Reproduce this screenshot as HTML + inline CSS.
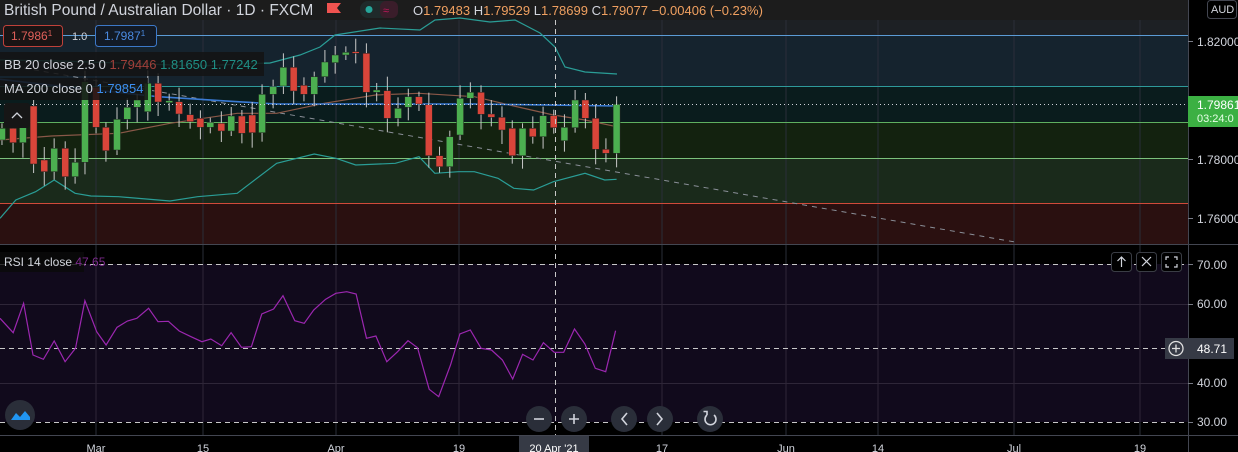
<!DOCTYPE html>
<html><head><meta charset="utf-8"><style>
html,body{margin:0;padding:0;background:#000;width:1238px;height:452px;overflow:hidden;font-family:"Liberation Sans",sans-serif}
svg text{font-family:"Liberation Sans",sans-serif}
</style></head><body>
<svg id="s" width="1238" height="452" xmlns="http://www.w3.org/2000/svg">
<rect width="1238" height="452" fill="#000"/>
<rect x="0" y="0" width="1188" height="20" fill="#1c1c1c"/>
<rect x="0" y="20" width="1188" height="15" fill="#1d2024"/>
<rect x="0" y="35" width="1188" height="51" fill="#15232e"/>
<rect x="0" y="86" width="1188" height="36" fill="#0a1c1d"/>
<rect x="0" y="122" width="1188" height="36" fill="#13220f"/>
<rect x="0" y="158" width="1188" height="45" fill="#1a2a1b"/>
<rect x="0" y="203" width="1188" height="41" fill="#2a1010"/>
<g stroke="#2a2e39" stroke-width="1">
<line x1="96" y1="20" x2="96" y2="435"/><line x1="203" y1="20" x2="203" y2="435"/><line x1="336" y1="20" x2="336" y2="435"/><line x1="459" y1="20" x2="459" y2="435"/><line x1="662" y1="20" x2="662" y2="435"/><line x1="786" y1="20" x2="786" y2="435"/><line x1="878" y1="20" x2="878" y2="435"/><line x1="1014" y1="20" x2="1014" y2="435"/><line x1="1140" y1="20" x2="1140" y2="435"/>
</g>
<line x1="0" y1="35.5" x2="1188" y2="35.5" stroke="#5b9bd5"/>
<line x1="0" y1="86.5" x2="1188" y2="86.5" stroke="#2e9a9a"/>
<line x1="0" y1="122.5" x2="1188" y2="122.5" stroke="#5fb060"/>
<line x1="0" y1="158.5" x2="1188" y2="158.5" stroke="#7cc27c"/>
<line x1="0" y1="203.5" x2="1188" y2="203.5" stroke="#d04a3a"/>
<line x1="24" y1="68" x2="1015" y2="242" stroke="#8a8f98" stroke-dasharray="5,5"/>
<g id="ind" fill="none" stroke-width="1.2"></g>
<g id="candles"></g>
<line x1="0" y1="104.5" x2="1188" y2="104.5" stroke="#cfd3da" stroke-dasharray="1,3"/>
<rect x="0" y="264" width="1188" height="158" fill="#110a1c"/>
<line x1="0" y1="304.5" x2="1188" y2="304.5" stroke="#2e2638"/>
<line x1="0" y1="383.5" x2="1188" y2="383.5" stroke="#2e2638"/>
<g stroke="#2e2638"><line x1="96" y1="264" x2="96" y2="422"/><line x1="203" y1="264" x2="203" y2="422"/><line x1="336" y1="264" x2="336" y2="422"/><line x1="459" y1="264" x2="459" y2="422"/><line x1="662" y1="264" x2="662" y2="422"/><line x1="786" y1="264" x2="786" y2="422"/><line x1="878" y1="264" x2="878" y2="422"/><line x1="1014" y1="264" x2="1014" y2="422"/><line x1="1140" y1="264" x2="1140" y2="422"/></g>
<g stroke="#c8c8c8" stroke-dasharray="5,4">
<line x1="0" y1="264.5" x2="1188" y2="264.5"/><line x1="0" y1="422.5" x2="1188" y2="422.5"/><line x1="0" y1="348.5" x2="1165" y2="348.5"/>
<line x1="555.5" y1="20" x2="555.5" y2="435"/>
</g>
<polyline id="rsi" fill="none" stroke="#9c27b0" stroke-width="1.2"/>
<line x1="0" y1="244.5" x2="1238" y2="244.5" stroke="#434651"/>
<line x1="1188.5" y1="0" x2="1188.5" y2="452" stroke="#434651"/>
<line x1="0" y1="435.5" x2="1238" y2="435.5" stroke="#434651"/>
<text x="4" y="15" font-size="15.5" fill="#d1d4dc">British Pound / Australian Dollar · 1D · FXCM</text>
<path d="M327 3h14l-4 5 4 5h-14z" fill="#f05350"/>
<rect x="360" y="1" width="38" height="17" rx="8" fill="#1f2a2a"/>
<circle cx="369" cy="9.5" r="3.5" fill="#26a69a"/>
<rect x="380" y="1" width="18" height="17" rx="6" fill="#3a1d2a"/>
<text x="383" y="14" font-size="11" fill="#c2185b">≈</text>
<text x="413" y="15" font-size="13" fill="#d1d4dc">O<tspan fill="#f0a060">1.79483</tspan> H<tspan fill="#f0a060">1.79529</tspan> L<tspan fill="#f0a060">1.78699</tspan> C<tspan fill="#f0a060">1.79077</tspan> <tspan fill="#f0a060">−0.00406 (−0.23%)</tspan></text>
<rect x="3.5" y="25.5" width="59" height="21" rx="3" fill="#1a1414" stroke="#c0413a"/>
<text x="11" y="40" font-size="12" fill="#e0605a">1.7986<tspan font-size="8" dy="-4">1</tspan></text>
<text x="72" y="40" font-size="11" fill="#d1d4dc">1.0</text>
<rect x="95.5" y="25.5" width="61" height="21" rx="3" fill="#121a26" stroke="#3c78c8"/>
<text x="104" y="40" font-size="12" fill="#4a8ae0">1.7987<tspan font-size="8" dy="-4">1</tspan></text>
<rect x="0" y="52" width="264" height="24" fill="#131313" opacity="0.85"/>
<text x="4" y="69" font-size="13" fill="#d1d4dc">BB 20 close 2.5 0 <tspan fill="#a0403a">1.79446</tspan> <tspan fill="#1f8f85">1.81650</tspan> <tspan fill="#1f8f85">1.77242</tspan></text>
<rect x="0" y="78" width="148" height="22" fill="#131313" opacity="0.85"/>
<text x="4" y="93" font-size="13" fill="#d1d4dc">MA 200 close 0 <tspan fill="#3c8ef0">1.79854</tspan></text>
<rect x="4" y="103" width="26" height="25" rx="3" fill="#161616"/>
<path d="M12 118l5-5 5 5" stroke="#d1d4dc" fill="none" stroke-width="1.3"/>
<rect x="0" y="252" width="84" height="20" fill="#0a0a0a" opacity="0.8"/>
<text x="4" y="266" font-size="12" fill="#d1d4dc">RSI 14 close <tspan fill="#7b2a8c">47.65</tspan></text>
<rect x="1207.5" y="0.5" width="29" height="18" rx="3" fill="#000" stroke="#434651"/>
<text x="1211" y="13" font-size="11" fill="#d1d4dc">AUD</text>
<g font-size="12" fill="#d1d4dc">
<text x="1197" y="46">1.82000</text>
<text x="1197" y="164">1.78000</text>
<text x="1197" y="223">1.76000</text>
<text x="1197" y="269">70.00</text>
<text x="1197" y="308">60.00</text>
<text x="1197" y="387">40.00</text>
<text x="1197" y="426">30.00</text>
</g>
<g stroke="#787b86"><line x1="1188" y1="41.5" x2="1193" y2="41.5"/><line x1="1188" y1="159.5" x2="1193" y2="159.5"/><line x1="1188" y1="218.5" x2="1193" y2="218.5"/><line x1="1188" y1="264.5" x2="1193" y2="264.5"/><line x1="1188" y1="304.5" x2="1193" y2="304.5"/><line x1="1188" y1="383.5" x2="1193" y2="383.5"/><line x1="1188" y1="422.5" x2="1193" y2="422.5"/></g>
<rect x="1188" y="96" width="50" height="31" fill="#3cb043"/>
<text x="1197" y="109" font-size="12" fill="#fff">1.79861</text>
<text x="1197" y="122" font-size="11" fill="#e8ffe8">03:24:0</text>
<rect x="1165" y="338" width="23" height="21" fill="#363a45"/>
<circle cx="1176" cy="348.5" r="7" fill="none" stroke="#e0e0e0" stroke-width="1.3"/>
<path d="M1172 348.5h8M1176 344.5v8" stroke="#e0e0e0" stroke-width="1.3"/>
<rect x="1188" y="338" width="46" height="21" fill="#363a45"/>
<text x="1197" y="353" font-size="12" fill="#fff">48.71</text>
<g fill="#000" stroke="#3a3d45"><rect x="1111.5" y="252.5" width="20" height="19" rx="3"/><rect x="1136.5" y="252.5" width="20" height="19" rx="3"/><rect x="1161.5" y="252.5" width="20" height="19" rx="3"/></g>
<g stroke="#d1d4dc" fill="none" stroke-width="1.2"><path d="M1121.5 267v-10M1117.5 261l4-4 4 4"/><path d="M1142 257l9 9M1151 257l-9 9"/><path d="M1166 260v-3h3M1174 257h3v3M1177 264v3h-3M1169 267h-3v-3"/></g>
<circle cx="20" cy="415" r="15" fill="#2a2e39"/>
<path d="M11 420l5-7 4 4 5-6 5 6v3z" fill="#2196f3"/>
<g fill="#2a2e39"><circle cx="539" cy="419" r="13"/><circle cx="574" cy="419" r="13"/><circle cx="624" cy="419" r="13"/><circle cx="660" cy="419" r="13"/><circle cx="710" cy="419" r="13"/></g>
<g stroke="#d1d4dc" fill="none" stroke-width="1.6"><path d="M534 419h10"/><path d="M569 419h10M574 414v10"/><path d="M627 413l-5 6 5 6"/><path d="M657 413l5 6-5 6"/><path d="M714 415a5.5 5.5 0 1 1-7 0M707 415v-3.5h-3.5"/></g>
<g font-size="11" fill="#d1d4dc" text-anchor="middle">
<text x="96" y="452">Mar</text><text x="203" y="452">15</text><text x="336" y="452">Apr</text><text x="459" y="452">19</text><text x="662" y="452">17</text><text x="786" y="452">Jun</text><text x="878" y="452">14</text><text x="1014" y="452">Jul</text><text x="1140" y="452">19</text>
</g>
<rect x="519" y="436" width="70" height="16" fill="#363a45"/>
<text x="554" y="452" font-size="11" fill="#fff" text-anchor="middle">20 Apr '21</text>
</svg>
<script>
var C=[[5,385,420,1],[33,385,428,0],[58,340,428,1],[85,318,492,0],[112,480,515,0],[137,445,515,1],[165,445,530,0],[190,487,530,1],[215,245,487,1],[243,262,382,0],[268,382,452,0],[296,358,450,1],[322,322,358,1],[347,300,322,1],[374,250,335,1],[400,250,306,0],[428,302,308,1],[453,305,342,0],[481,344,365,0],[507,355,382,0],[532,368,382,1],[560,370,393,0],[585,348,393,1],[612,348,400,0],[638,345,398,0],[663,283,398,1],[691,260,283,1],[717,202,258,1],[743,202,273,0],[769,256,283,0],[795,230,283,1],[822,186,230,1],[848,165,188,1],[875,157,165,1],[900,155,160,0],[927,160,277,0],[953,270,277,1],[980,272,355,0],[1007,325,355,1],[1033,290,322,1],[1060,290,312,0],[1085,314,467,0],[1112,467,500,0],[1138,410,500,1],[1164,295,405,1],[1190,277,295,1],[1217,277,343,0],[1243,342,352,0],[1270,352,390,0],[1296,385,467,0],[1322,385,467,1],[1348,385,410,0],[1374,347,410,1],[1401,347,383,0],[1428,382,422,1],[1455,300,383,1],[1481,300,355,0],[1507,355,448,0],[1533,448,460,0],[1560,313,460,1]];
var g=document.getElementById("candles"),h="";
C.forEach(function(c,i){var x=c[0]/2.53,t=c[1]/3,b=c[2]/3,col=c[3]?"#4caf50":"#d9453a";
var wt=t-5-(i*7%10),wb=b+5+(i*5%11);
h+='<line x1="'+x+'" y1="'+wt+'" x2="'+x+'" y2="'+wb+'" stroke="#c8c8c8" stroke-width="1"/>';
h+='<rect x="'+(x-3.5)+'" y="'+t+'" width="7" height="'+Math.max(b-t,1.5)+'" fill="'+col+'" stroke="#222" stroke-width="0.5"/>';});
g.innerHTML=h;
function P(a,sx,sy,oy){return a.map(function(p){return (p[0]/sx).toFixed(1)+","+(oy+p[1]/sy).toFixed(1)}).join(" ")}
var up=[[0,60],[60,61],[120,63],[200,66],[240,64],[270,63],[300,55],[320,47],[335,35],[380,28],[420,30],[435,20],[460,18],[490,22],[515,20],[540,33],[555,47],[565,67],[585,72],[617,74]];
var lo=[[0,655],[40,600],[90,575],[137,540],[190,580],[230,588],[300,590],[400,600],[430,603],[500,590],[600,580],[700,490],[795,462],[850,475],[900,495],[1000,490],[1060,470],[1100,520],[1160,515],[1200,515],[1260,535],[1300,565],[1350,570],[1400,545],[1480,520],[1530,540],[1560,538]];
var mid=[[0,420],[130,408],[300,400],[430,370],[600,340],[700,340],[820,310],[950,285],[1060,280],[1200,290],[1300,318],[1400,345],[1480,360],[1560,380]];
var ma=[[0,238],[200,265],[400,290],[600,305],[700,312],[900,312],[1200,312],[1560,318]];
document.getElementById("ind").innerHTML=
'<polyline points="'+P(up,1,1,0)+'" stroke="#2a9d96"/>'+
'<polyline points="'+P(lo,2.53,3,0)+'" stroke="#2a9d96"/>'+
'<polyline points="'+P(mid,2.53,3,0)+'" stroke="#8a5848"/>'+
'<polyline points="'+P(ma,2.53,3,0)+'" stroke="#3a7bd5" stroke-width="1.6"/>';
var r=[[0,205],[28,248],[50,160],[70,315],[92,328],[115,273],[138,335],[160,295],[180,152],[205,245],[225,285],[248,232],[270,213],[290,205],[315,175],[335,215],[357,214],[380,243],[405,260],[428,275],[447,267],[470,287],[490,248],[512,292],[533,290],[555,192],[580,177],[600,137],[625,212],[645,220],[665,180],[690,148],[712,130],[735,125],[755,132],[777,265],[797,258],[820,335],[843,305],[865,272],[885,293],[910,418],[930,440],[955,345],[975,252],[997,240],[1020,295],[1042,300],[1065,330],[1087,387],[1108,313],[1130,330],[1152,278],[1175,307],[1195,307],[1218,237],[1240,282],[1262,355],[1284,365],[1305,242]];
document.getElementById("rsi").setAttribute("points",P(r,2.12,3,250));
</script>
</body></html>
